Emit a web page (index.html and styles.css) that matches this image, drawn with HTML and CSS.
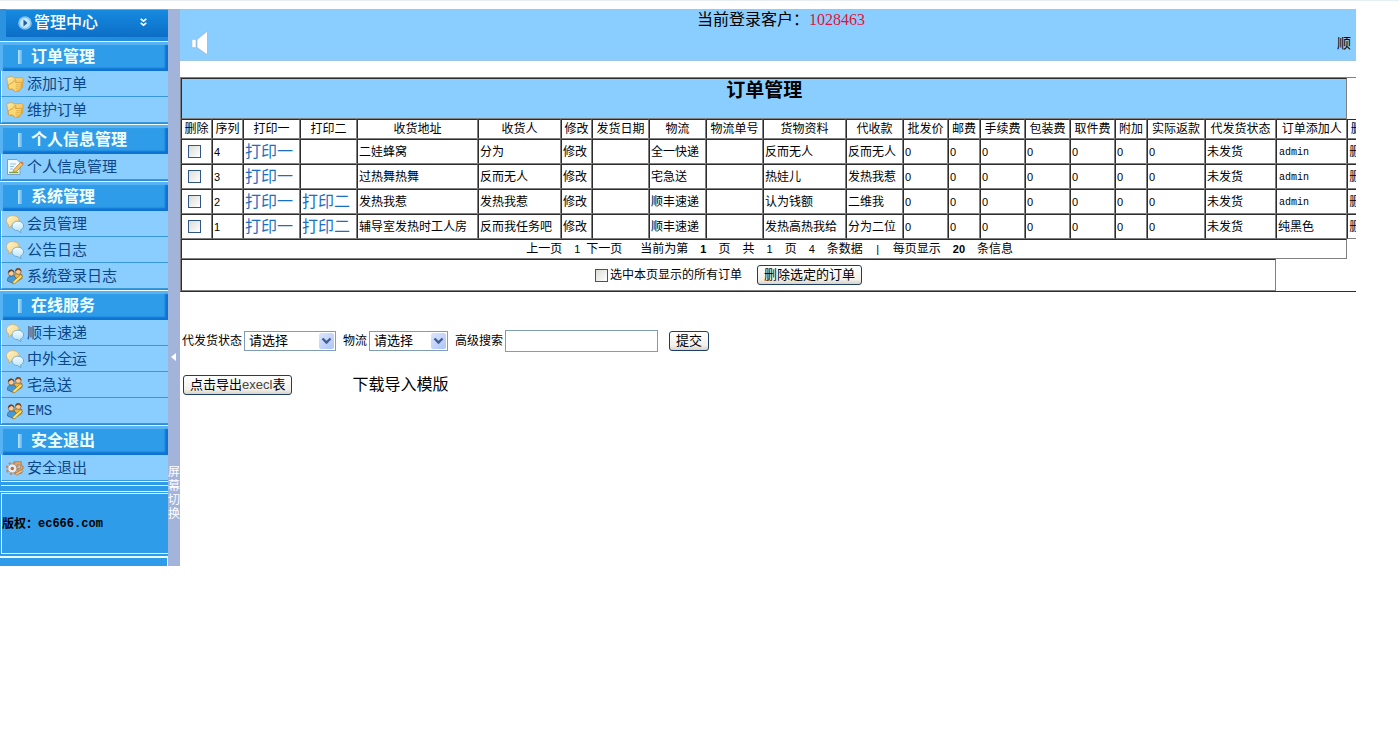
FILE: index.html
```html
<!DOCTYPE html>
<html lang="zh-CN">
<head>
<meta charset="utf-8">
<title>管理中心 - 订单管理</title>
<link rel="stylesheet" href="styles.css">
</head>
<body>
<svg class="defs" aria-hidden="true">
  <defs>
    <linearGradient id="gold" x1="0" y1="0" x2="1" y2="1"><stop offset="0" stop-color="#fff0a8"/><stop offset="1" stop-color="#e9a936"/></linearGradient>
    <linearGradient id="cream" x1="0" y1="0" x2="1" y2="1"><stop offset="0" stop-color="#fff6cf"/><stop offset="1" stop-color="#f3cf78"/></linearGradient>
    <linearGradient id="ice" x1="0" y1="0" x2="0" y2="1"><stop offset="0" stop-color="#f4fcff"/><stop offset="1" stop-color="#b4e2f8"/></linearGradient>
    <symbol id="i-folder" viewBox="0 0 18 18">
      <path d="M.8 2.500l5.500-1 1.500 1.500 8-.5 1.500 1.500-.8 8-4 4.500-8.500-2.500-2-1z" fill="url(#gold)" stroke="#d79a35" stroke-width=".7"/>
      <path d="M2.500 9.500l4.500-2 2-3 1 .5-.5 2.500h6v2.500l-1 4.500-5 2-3-2.500h-4z" fill="#fbd873" stroke="#cf9636" stroke-width=".7"/>
      <path d="M10 9.800h5M9.500 11.800h5M9.500 13.800h4" stroke="#d8a13c" stroke-width=".7"/>
    </symbol>
    <symbol id="i-note" viewBox="0 0 18 18">
      <path d="M1.500 1.500h9.500l3 3v12H1.500z" fill="#f3faff" stroke="#7b9fc2"/>
      <path d="M4 6h6M4 8.500h4M4 11h3" stroke="#8fc2e4"/>
      <path d="M3 14.500h9.500" stroke="#6cae48" stroke-width="1.500"/>
      <path d="M7.500 12l7-7.500 2.500 2-6.500 7-3.500 1z" fill="#f6c765" stroke="#b47a35" stroke-width=".8"/>
      <path d="M14.500 4.500l2.500 2 .6-1.600-1.700-1.500z" fill="#d97558"/>
    </symbol>
    <symbol id="i-chat" viewBox="0 0 18 18">
      <path d="M6.500.6C3 .6.500 2.800.5 5.800c0 1.900 1 3.400 2.300 4.200L2.600 13l3-2.300c4 .4 7.500-1.600 7.500-4.900C13.100 2.800 10.500.6 6.500.6z" fill="url(#cream)" stroke="#c9aa68" stroke-width=".8"/>
      <path d="M12 6.200c-3.400 0-6 2-6 4.800 0 2.700 2.500 4.700 5.800 4.600l3.200 2.100-.4-2.800c1.800-.8 3-2.300 3-3.900 0-2.800-2.400-4.800-5.600-4.800z" fill="url(#ice)" stroke="#6a9dc0" stroke-width=".8"/>
    </symbol>
    <symbol id="i-people" viewBox="0 0 18 18">
      <path d="M8 8l3-1.500 5 1v4l-5 3z" fill="#f0b73d" stroke="#986423" stroke-width=".7"/>
      <circle cx="12.200" cy="4.500" r="2.900" fill="#f6cb9a" stroke="#77461f" stroke-width=".6"/>
      <path d="M9.200 4.500c-.2-5 6.600-4.700 6.100.2-1-.8-2.200-2-2.800-2-1 .2-2 1.300-3.300 1.800z" fill="#7a4a24"/>
      <path d="M1.500 14c-.4-4 2-5.200 4.500-5.200s4.500 1.200 4.500 4.800l-4 2.400z" fill="#469bd7" stroke="#2d5f90" stroke-width=".7"/>
      <circle cx="5.200" cy="6" r="3" fill="#f6cb9a" stroke="#77461f" stroke-width=".6"/>
      <path d="M2 6c-.2-4.800 6.500-4.800 6.300 0-1-.6-1.800-1.700-2.500-1.900C4.500 4.300 4 5.400 2 6z" fill="#634026"/>
      <path d="M7 14.500l7.500-6.500 2 1.500-7.500 7-2.500.3z" fill="#ffe267" stroke="#947030" stroke-width=".7"/>
    </symbol>
    <symbol id="i-gear" viewBox="0 0 20 18">
      <path d="M9 2h8v4l2 1v3l-2 1v4H9z" fill="#e0a56c" stroke="#a8703f" stroke-width=".8"/>
      <circle cx="14" cy="7.500" r="2.400" fill="#9bd2f6" stroke="#a8703f" stroke-width=".7"/>
      <circle cx="7" cy="9.500" r="6.200" fill="none" stroke="#c08a62" stroke-width="2.400" stroke-dasharray="2.500 2.370"/>
      <circle cx="7" cy="9.500" r="5" fill="#e7edf2" stroke="#a38571" stroke-width=".8"/>
      <circle cx="7" cy="9.500" r="1.900" fill="#b86c45"/>
      <path d="M10 15l7-4 2 2-7 4z" fill="#efbd7e" stroke="#a26b3c" stroke-width=".7"/>
    </symbol>
    <symbol id="i-drop" viewBox="0 0 15 16"><path d="M3.500 5.500l4 4 4-4" fill="none" stroke="#3f5f94" stroke-width="2.400"/></symbol>
  </defs>
</svg>

<div class="app">
  <aside class="sidebar">
    <div class="brand-wrap">
      <div class="brand">
        <svg class="brand-icon" viewBox="0 0 14 14"><circle cx="7" cy="7" r="6.800" fill="#7fc3f3"/><circle cx="7" cy="7" r="5" fill="#c4e6fc"/><path d="M5.500 3.500L9.500 7l-4 3.500z" fill="#1c5c9c"/></svg>
        <span class="brand-name">管理中心</span>
        <svg class="brand-more" viewBox="0 0 8 8"><path d="M1.500 .8L4 2.800 6.500.8M1.500 4.300L4 6.300l2.500-2" fill="none" stroke="#fff" stroke-width="1.500"/></svg>
      </div>
    </div>
    <nav>
      <section class="group">
        <h2 class="group-title">订单管理</h2>
        <a class="item" href="#add"><svg class="icon"><use href="#i-folder"/></svg>添加订单</a>
        <a class="item" href="#maintain"><svg class="icon"><use href="#i-folder"/></svg>维护订单</a>
      </section>
      <section class="group">
        <h2 class="group-title">个人信息管理</h2>
        <a class="item" href="#profile"><svg class="icon"><use href="#i-note"/></svg>个人信息管理</a>
      </section>
      <section class="group">
        <h2 class="group-title">系统管理</h2>
        <a class="item" href="#members"><svg class="icon"><use href="#i-chat"/></svg>会员管理</a>
        <a class="item" href="#notices"><svg class="icon"><use href="#i-chat"/></svg>公告日志</a>
        <a class="item" href="#logins"><svg class="icon"><use href="#i-people"/></svg>系统登录日志</a>
      </section>
      <section class="group">
        <h2 class="group-title">在线服务</h2>
        <a class="item" href="#sf"><svg class="icon"><use href="#i-chat"/></svg>顺丰速递</a>
        <a class="item" href="#zw"><svg class="icon"><use href="#i-chat"/></svg>中外全运</a>
        <a class="item" href="#zjs"><svg class="icon"><use href="#i-people"/></svg>宅急送</a>
        <a class="item" href="#ems"><svg class="icon"><use href="#i-people"/></svg><span class="mono">EMS</span></a>
      </section>
      <section class="group">
        <h2 class="group-title">安全退出</h2>
        <a class="item" href="#exit"><svg class="icon"><use href="#i-gear"/></svg>安全退出</a>
      </section>
    </nav>
    <div class="rule"></div>
    <div class="rule rule-wide"></div>
    <div class="copyright">版权：<span class="copyright-site">ec666.com</span></div>
    <div class="foot"></div>
  </aside>

  <button class="splitter" type="button">
    <svg class="splitter-arrow" viewBox="0 0 6 10"><path d="M5 1v8L0 5z" fill="#fff"/></svg>
    <span class="splitter-text">屏幕切换</span>
  </button>

  <main class="main">
    <header class="banner">
      <div class="login">当前登录客户：<span class="login-id">1028463</span></div>
      <div class="ticker">
        <svg class="speaker" viewBox="0 0 18 24"><path d="M1 8.500h4v8H1z" fill="#fff" stroke="#a5bccb" stroke-width=".6"/><path d="M6 8.500L16.500 0v24L6 16.500z" fill="#fff" stroke="#8fabbd" stroke-width=".6"/></svg>
        <span>顺</span>
      </div>
    </header>

    <table class="orders">
      <colgroup>
        <col class="w31"><col class="w31"><col class="w57"><col class="w57"><col class="w121"><col class="w83"><col class="w31"><col class="w57"><col class="w57"><col class="w57"><col class="w83"><col class="w57"><col class="w45"><col class="w32"><col class="w45"><col class="w45"><col class="w45"><col class="w32"><col class="w58"><col class="w71"><col class="w71"><col class="w31">
      </colgroup>
      <thead>
        <tr class="title-row"><th colspan="21">订单管理</th></tr>
        <tr class="head-row"><th>删除</th><th>序列</th><th>打印一</th><th>打印二</th><th>收货地址</th><th>收货人</th><th>修改</th><th>发货日期</th><th>物流</th><th>物流单号</th><th>货物资料</th><th>代收款</th><th>批发价</th><th>邮费</th><th>手续费</th><th>包装费</th><th>取件费</th><th>附加</th><th>实际返款</th><th>代发货状态</th><th>订单添加人</th><th>删除</th></tr>
      </thead>
      <tbody>
        <tr><td><input class="check" type="checkbox" aria-label="选择 4"></td><td class="n">4</td><td><a class="print" href="#p1">打印一</a></td><td></td><td>二娃蜂窝</td><td>分为</td><td><a href="#e4">修改</a></td><td></td><td>全一快递</td><td></td><td>反而无人</td><td>反而无人</td><td class="n">0</td><td class="n">0</td><td class="n">0</td><td class="n">0</td><td class="n">0</td><td class="n">0</td><td class="n">0</td><td>未发货</td><td><span class="user">admin</span></td><td><a href="#d4">删除</a></td></tr>
        <tr><td><input class="check" type="checkbox" aria-label="选择 3"></td><td class="n">3</td><td><a class="print" href="#p1">打印一</a></td><td></td><td>过热舞热舞</td><td>反而无人</td><td><a href="#e3">修改</a></td><td></td><td>宅急送</td><td></td><td>热娃儿</td><td>发热我惹</td><td class="n">0</td><td class="n">0</td><td class="n">0</td><td class="n">0</td><td class="n">0</td><td class="n">0</td><td class="n">0</td><td>未发货</td><td><span class="user">admin</span></td><td><a href="#d3">删除</a></td></tr>
        <tr><td><input class="check" type="checkbox" aria-label="选择 2"></td><td class="n">2</td><td><a class="print" href="#p1">打印一</a></td><td><a class="print" href="#p2">打印二</a></td><td>发热我惹</td><td>发热我惹</td><td><a href="#e2">修改</a></td><td></td><td>顺丰速递</td><td></td><td>认为钱额</td><td>二维我</td><td class="n">0</td><td class="n">0</td><td class="n">0</td><td class="n">0</td><td class="n">0</td><td class="n">0</td><td class="n">0</td><td>未发货</td><td><span class="user">admin</span></td><td><a href="#d2">删除</a></td></tr>
        <tr><td><input class="check" type="checkbox" aria-label="选择 1"></td><td class="n">1</td><td><a class="print" href="#p1">打印一</a></td><td><a class="print" href="#p2">打印二</a></td><td>辅导室发热时工人房</td><td>反而我任务吧</td><td><a href="#e1">修改</a></td><td></td><td>顺丰速递</td><td></td><td>发热高热我给</td><td>分为二位</td><td class="n">0</td><td class="n">0</td><td class="n">0</td><td class="n">0</td><td class="n">0</td><td class="n">0</td><td class="n">0</td><td>未发货</td><td>纯黑色</td><td><a href="#d1">删除</a></td></tr>
      </tbody>
      <tfoot>
        <tr class="pager-row"><td colspan="21">
          <div class="pager">
            <span class="pages"><a href="#prev">上一页</a><span class="near"><span class="num">1</span><a href="#next">下一页</a></span></span>
            <span>当前为第</span><b class="num">1</b><span>页</span><span>共</span><span class="num">1</span><span>页</span><span class="num">4</span><span>条数据</span><span class="num">|</span><span>每页显示</span><b class="num">20</b><span>条信息</span>
          </div>
        </td></tr>
        <tr class="action-row"><td colspan="20">
          <div class="actions">
            <label class="select-all"><input class="check" type="checkbox">选中本页显示的所有订单</label>
            <button class="btn" type="button">删除选定的订单</button>
          </div>
        </td></tr>
      </tfoot>
    </table>

    <form class="search">
      <label for="state">代发货状态</label>
      <span class="drop drop-wide"><select id="state"><option>请选择</option></select><svg class="drop-arrow"><use href="#i-drop"/></svg></span>
      <label class="next" for="carrier">物流</label>
      <span class="drop"><select id="carrier"><option>请选择</option></select><svg class="drop-arrow"><use href="#i-drop"/></svg></span>
      <label class="next" for="keyword">高级搜索</label>
      <input class="keyword" id="keyword" type="text">
      <button class="btn submit" type="button">提交</button>
    </form>

    <div class="export">
      <button class="btn" type="button">点击导出<span class="latin">execl</span>表</button>
      <a class="template" href="#template">下载导入模版</a>
    </div>
  </main>
</div>
</body>
</html>
```

FILE: styles.css
```css
* { box-sizing: border-box; }

body {
  margin: 0;
  border-top: 1px solid #e6eef3;
  background: #fff;
  color: #000;
  font: 12px/16px "Liberation Sans", "Noto Sans CJK SC", sans-serif;
}

a { color: inherit; text-decoration: none; }
.defs { position: absolute; width: 0; height: 0; }

.app {
  display: flex;
  align-items: flex-start;
  margin: 8px 43px 0 0;
}

/* Sidebar */
.sidebar {
  flex: none;
  width: 168px;
  background: #2f9ce9;
}

.brand-wrap {
  padding: 0 0 4px 6px;
  background: linear-gradient(90deg, #2c93e0, #1f8adb);
}

.brand {
  display: flex;
  align-items: center;
  height: 28px;
  padding: 0 20px 2px 12px;
  border-top: 1px solid #58aeea;
  background: linear-gradient(#168ae0, #0c6ec6);
  color: #fff;
}

.brand-icon { width: 14px; height: 14px; }
.brand-name { margin-left: 2px; font-size: 16px; line-height: 20px; font-weight: 500; }
.brand-more { width: 9px; height: 9px; margin-left: auto; }

.group { border-bottom: 1px solid #2f8bd6; }
.group:last-child { border-bottom: 0; }

.group-title {
  display: flex;
  align-items: center;
  height: 30px;
  margin: 0;
  padding-left: 18px;
  border-top: 1px solid #f0ffff;
  background: #2f9ce9;
  box-shadow: inset 3px 3px 1px #58b3f3, inset -3px -3px 2px #0d72d2;
  color: #f0ffff;
  font-size: 16px;
  line-height: 20px;
  font-weight: 700;
}

.group-title::before {
  content: "";
  width: 4px;
  height: 14px;
  margin-right: 9px;
  background: linear-gradient(90deg, #b8e4ff, #5fb4f0);
}

.item {
  display: flex;
  align-items: center;
  gap: 3px;
  height: 26px;
  margin-left: 1px;
  padding-left: 4px;
  border-left: 1px solid #e6ffff;
  border-bottom: 1px solid #3998dc;
  background: #8acdff;
  color: #0b4788;
  font-size: 15px;
  line-height: 20px;
}

.icon { flex: none; width: 18px; height: 18px; }
.mono { font: 14px/20px "Liberation Mono", monospace; }

.rule {
  height: 5px;
  margin-left: 1px;
  border-top: 1px solid #e6ffff;
  border-bottom: 1px solid #e6ffff;
}

.rule-wide { height: 6px; margin-left: 0; border-top: 0; }

.copyright {
  display: flex;
  align-items: center;
  height: 61px;
  margin: 1px 0 2px 1px;
  border: 1px solid #e6ffff;
  border-right: 0;
  font-size: 12px;
  font-weight: 700;
}

.copyright-site { font: 700 12px/16px "Liberation Mono", monospace; }

.foot {
  height: 10px;
  border-top: 2px solid #e6ffff;
  border-right: 1px solid #e6ffff;
}

.splitter {
  display: flex;
  flex: none;
  flex-direction: column;
  align-items: center;
  align-self: stretch;
  justify-content: flex-start;
  gap: 102px;
  width: 12px;
  margin: 0;
  padding: 343px 0 0;
  border: 0;
  background: #a3b4db;
  color: #fff;
  font: 12px/14px "Noto Sans CJK SC", sans-serif;
}

.splitter-arrow { width: 6px; height: 10px; }
.splitter-text { width: 12px; word-break: break-all; }

/* Main column */
.main { flex: 1; min-width: 0; overflow: hidden; }

.banner {
  height: 52px;
  background: #8acdff;
  box-shadow: inset 0 1px #9cc8e6, inset 0 -1px #9cc8e6;
}

.login {
  padding-left: 26px;
  font-size: 16px;
  line-height: 22px;
  text-align: center;
}

.login-id { color: #e0123c; font-family: "Liberation Serif", serif; }

.ticker {
  display: flex;
  align-items: center;
  justify-content: space-between;
  padding: 0 5px 0 11px;
  font-size: 14px;
  line-height: 20px;
}

.speaker { width: 18px; height: 24px; }

/* Orders */
.orders {
  width: 1199px;
  margin: 16px 0 0;
  border: 1px solid;
  border-color: #808080 #2c2c2c #2c2c2c #808080;
  border-spacing: 0;
  table-layout: fixed;
}

.w31 { width: 31px; }
.w32 { width: 32px; }
.w45 { width: 45px; }
.w57 { width: 57px; }
.w58 { width: 58px; }
.w71 { width: 71px; }
.w83 { width: 83px; }
.w121 { width: 121px; }

.orders th,
.orders td {
  height: 25px;
  padding: 0 1px;
  border: 1px solid;
  border-color: #2c2c2c #808080 #808080 #2c2c2c;
  font-weight: 400;
  text-align: left;
  white-space: nowrap;
}

.orders .title-row th {
  height: 41px;
  background: #8acdff;
  font-size: 19px;
  line-height: 24px;
  font-weight: 700;
  text-align: center;
  vertical-align: top;
}

.orders .head-row th { height: 20px; text-align: center; }
.orders .pager-row td { height: 20px; }
.orders .action-row td { height: 32px; }
.orders .n { font-size: 11px; }

.print { color: #1b6fc2; font-size: 16px; line-height: 20px; }
.user { padding-left: 1px; font: 10px/16px "Liberation Mono", monospace; }

.check {
  appearance: none;
  display: block;
  width: 13px;
  height: 13px;
  margin: 0 0 0 5px;
  border: 1px solid #2f5882;
  background: linear-gradient(135deg, #dcdcd7, #fff);
}

.pager {
  display: flex;
  justify-content: center;
  gap: 12px;
  padding-left: 11px;
  font-size: 12px;
}

.pages { display: flex; gap: 12px; margin-right: 6px; }
.near { display: flex; gap: 6px; }
.num { min-width: 6px; font-size: 11px; text-align: center; }

.actions {
  display: flex;
  align-items: center;
  justify-content: center;
  gap: 15px;
}

.select-all { display: flex; align-items: center; gap: 2px; }
.select-all .check { margin: 0; }

/* Form controls */
.btn {
  height: 20px;
  padding: 0 6px;
  border: 1px solid #1d3f66;
  border-radius: 3px;
  background: linear-gradient(#fff, #f1f0ea 75%, #d8d2c6);
  color: #000;
  font: 13px/16px "Liberation Sans", "Noto Sans CJK SC", sans-serif;
  white-space: nowrap;
}

.latin { color: #444; }

.search {
  display: flex;
  align-items: center;
  gap: 2px;
  margin: 38px 0 0 2px;
}

.next { margin-left: 5px; }
.drop { position: relative; width: 79px; height: 20px; }
.drop-wide { width: 92px; }

.drop select {
  appearance: none;
  width: 100%;
  height: 20px;
  padding: 0 4px;
  border: 1px solid #7f9db9;
  border-radius: 0;
  background: #fff;
  color: #000;
  font: 13px/18px "Liberation Sans", "Noto Sans CJK SC", sans-serif;
}

.drop-arrow {
  position: absolute;
  top: 2px;
  right: 2px;
  width: 15px;
  height: 16px;
  border-radius: 2px;
  background: linear-gradient(135deg, #dbe6fe, #aec4f5);
  pointer-events: none;
}

.keyword {
  width: 153px;
  height: 22px;
  padding: 0 3px;
  border: 1px solid #7f9db9;
  font: 13px/18px "Liberation Sans", "Noto Sans CJK SC", sans-serif;
}

.submit { margin-left: 9px; }

.export {
  display: flex;
  align-items: center;
  gap: 60px;
  margin: 22px 0 0 3px;
}

.template { font-size: 16px; line-height: 22px; }
```
